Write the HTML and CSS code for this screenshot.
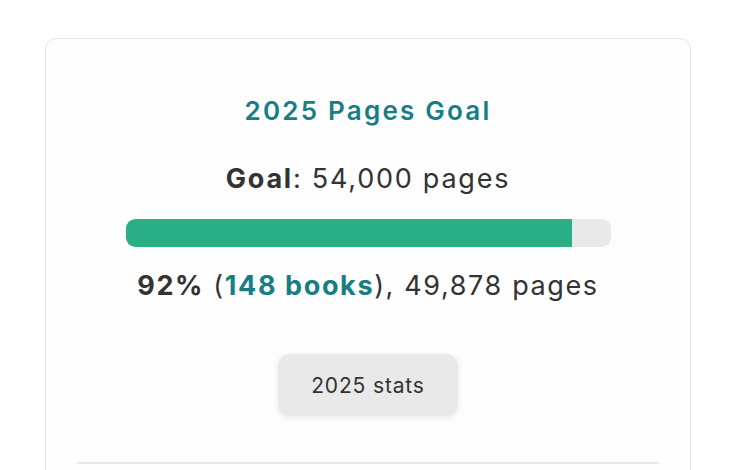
FILE: index.html
```html
<!DOCTYPE html>
<html>
<head>
<meta charset="utf-8">
<link rel="stylesheet" href="styles.css">
</head>
<body>
<main class="page">
  <section class="card">
    <h2 class="title">2025 Pages Goal</h2>
    <p class="goal"><strong>Goal</strong>: 54,000 pages</p>
    <div class="bar"><div class="fill" style="width: 92%"></div></div>
    <p class="progress"><strong>92%</strong> (<a class="books" href="#">148 books</a>), 49,878 pages</p>
    <div class="actions"><button class="btn">2025 stats</button></div>
    <hr class="divider">
  </section>
</main>
</body>
</html>
```
FILE: styles.css
```css
html, body { margin: 0; padding: 0; background: #ffffff; }
body { font-family: "Inter", "Noto Sans", sans-serif; color: #333333; }
.page { padding: 38px 45px 0 45px; height: 432px; overflow: hidden; }
.card {
  width: 646px;
  border: 1px solid #e6e6e6;
  border-radius: 11px;
  background: #fdfdfd;
  padding: 55px 31px 0 31px;
  box-sizing: border-box;
  height: 460px;
  display: flex;
  flex-direction: column;
  align-items: center;
}
.title {
  margin: 0;
  font-size: 26px;
  font-weight: 600;
  letter-spacing: 0.085em;
  color: #177e86;
  line-height: 34px;
}
.goal {
  margin: 34px 0 0 0;
  font-size: 27px;
  letter-spacing: 0.065em;
  line-height: 34px;
}
.goal strong, .progress strong { font-weight: 700; }
.bar {
  margin-top: 23px;
  width: 485px;
  height: 28px;
  border-radius: 9px;
  background: #e9e9e9;
  overflow: hidden;
}
.fill { height: 100%; background: #2aae85; border-radius: 9px 0 0 9px; }
.progress {
  margin: 22px 0 0 0;
  font-size: 27px;
  letter-spacing: 0.06em;
  line-height: 34px;
}
.books { color: #177e86; font-weight: 700; text-decoration: none; }
.actions { margin-top: 51px; }
.btn {
  display: block;
  width: 180px;
  height: 62px;
  border: none;
  border-radius: 12px;
  background: #e9e9e9;
  box-shadow: 0 2px 6px rgba(0,0,0,0.08);
  font-family: inherit;
  font-size: 21px;
  letter-spacing: 0.04em;
  color: #333333;
}
.divider {
  align-self: stretch;
  margin: 46px 0 0 0;
  border: none;
  border-top: 2px solid #e8e8e8;
}
```
